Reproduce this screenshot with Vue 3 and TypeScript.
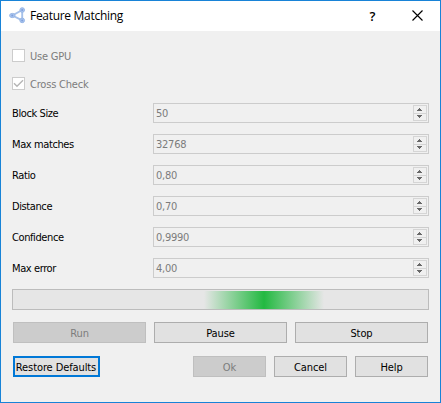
<script setup lang="ts">
interface Field {
  label: string
  value: string
  name: string
}

const fields: Field[] = [
  { label: 'Block Size', value: '50', name: 'block' },
  { label: 'Max matches', value: '32768', name: 'matches' },
  { label: 'Ratio', value: '0,80', name: 'ratio' },
  { label: 'Distance', value: '0,70', name: 'distance' },
  { label: 'Confidence', value: '0,9990', name: 'confidence' },
  { label: 'Max error', value: '4,00', name: 'error' },
]
</script>

<template>
  <div class="dialog">
    <header class="titlebar">
      <svg class="logo" width="17" height="17" viewBox="0 0 17 17">
        <path d="M13.2 3 3.5 8.5 13.2 13.4Z" fill="none" stroke="#a6c1ea" stroke-width="1.9" />
        <g fill="#a9c5f0" stroke="#98b7e6" stroke-width="1">
          <circle cx="13.2" cy="3" r="2.3" />
          <ellipse cx="3.3" cy="8.5" rx="2.7" ry="2.1" />
          <circle cx="13.2" cy="13.4" r="2.3" />
        </g>
        <g fill="#7f9fda">
          <circle cx="13.2" cy="3" r="1" />
          <circle cx="3.3" cy="8.5" r="1" />
          <circle cx="13.2" cy="13.4" r="1" />
        </g>
      </svg>
      <h1 class="title">Feature Matching</h1>
      <span class="question">?</span>
      <svg class="close" width="11" height="11" viewBox="0 0 11 11">
        <path d="M.5.5 10.5 10.5M10.5.5.5 10.5" stroke="#000" stroke-width="1.15" />
      </svg>
    </header>

    <div class="checks">
      <label class="check"><span class="box"></span><span class="caption">Use GPU</span></label>
      <label class="check">
        <span class="box">
          <svg width="11" height="11" viewBox="0 0 11 11">
            <path d="M1 5.3 4 8.3 10 2.3" fill="none" stroke="#b5b5b5" stroke-width="1.4" />
          </svg>
        </span>
        <span class="caption">Cross Check</span>
      </label>
    </div>

    <div class="fields">
      <div v-for="f in fields" :key="f.name" class="row">
        <span class="label">{{ f.label }}</span>
        <div class="spin">
          <span class="value">{{ f.value }}</span>
          <svg class="stepper" width="14" height="16" viewBox="0 0 14 16" shape-rendering="crispEdges">
            <path d="M.5.5H13.5V15.5H.5ZM.5 8.5H13.5" fill="#f0f0f0" stroke="#d5d5d5" />
            <path d="M6 3h1v1h1v1h1v1H4V5h1V4h1ZM4 10h5v1H8v1H7v1H6v-1H5v-1H4Z" fill="#686868" />
          </svg>
        </div>
      </div>
    </div>

    <div class="progress"><div class="chunk"></div></div>

    <div class="actions">
      <button class="btn" disabled>Run</button>
      <button class="btn">Pause</button>
      <button class="btn">Stop</button>
    </div>
    <div class="footer">
      <button class="btn restore">Restore Defaults</button>
      <button class="btn" disabled>Ok</button>
      <button class="btn">Cancel</button>
      <button class="btn">Help</button>
    </div>
  </div>
</template>

<style>
body {
  margin: 0;
}
</style>

<style scoped>
.dialog {
  box-sizing: border-box;
  width: 441px;
  height: 403px;
  border: 1px solid #1883d7;
  background: #f0f0f0;
  font: 11px/16px "DejaVu Sans Condensed", "DejaVu Sans", sans-serif;
  font-stretch: condensed;
  letter-spacing: -0.4px;
  color: #000;
  white-space: nowrap;
}
.titlebar {
  display: flex;
  align-items: center;
  height: 30px;
  padding-left: 8px;
  background: #fff;
  font-family: "Open Sans", "Noto Sans", sans-serif;
  font-stretch: normal;
}
.logo {
  margin-top: -2px;
}
.title {
  flex: 1;
  margin: 0 0 0 4px;
  font-size: 12px;
  font-weight: 400;
  letter-spacing: -0.3px;
}
.question {
  font-size: 13px;
  font-weight: 600;
  line-height: 14px;
  padding-bottom: 1px;
}
.close {
  margin: -2px 17px 0 37px;
}
.checks {
  display: flex;
  flex-direction: column;
  gap: 12px;
  padding: 17px 0 0 11px;
}
.check {
  display: flex;
  align-items: center;
  height: 16px;
  gap: 5px;
  color: #7c7c7c;
}
.caption {
  padding-top: 1px;
  line-height: 17px;
  letter-spacing: -0.2px;
}
.box {
  box-sizing: border-box;
  width: 13px;
  height: 13px;
  margin-top: -1px;
  border: 1px solid #ccc;
  background: #fff;
}
.box svg {
  display: block;
}
.fields {
  display: flex;
  flex-direction: column;
  gap: 11px;
  padding: 11px 11px 0;
}
.row {
  display: flex;
  align-items: center;
  height: 20px;
}
.label {
  width: 141px;
  padding-top: 2px;
}
.spin {
  display: flex;
  align-items: center;
  justify-content: space-between;
  box-sizing: border-box;
  width: 276px;
  height: 20px;
  padding: 0 1px 0 2px;
  border: 1px solid #ccc;
  color: #7c7c7c;
}
.value {
  padding-top: 2px;
  letter-spacing: -0.25px;
}
.progress {
  display: flex;
  justify-content: center;
  box-sizing: border-box;
  width: 417px;
  height: 21px;
  margin: 11px 0 0 11px;
  padding-top: 1px;
  border: 1px solid #bcbcbc;
  background: #e6e6e6;
}
.chunk {
  width: 120px;
  margin-left: 87px;
  background: linear-gradient(90deg, #e6e6e6, #23b941 50%, #e6e6e6);
}
.actions,
.footer {
  display: flex;
  gap: 8px;
  padding: 12px 12px 0;
}
.footer {
  padding-top: 13px;
}
.btn {
  box-sizing: border-box;
  width: 133px;
  height: 21px;
  padding: 2px 0 0;
  border: 1px solid #adadad;
  background: #e1e1e1;
  font: inherit;
  letter-spacing: -0.1px;
  line-height: 17px;
  color: #000;
}
.btn:disabled {
  border-color: #bfbfbf;
  background: #ccc;
  color: #7c7c7c;
}
.footer .btn {
  width: 73px;
}
.footer .restore {
  width: 87px;
  margin-right: auto;
  padding: 1px 1px 0 0;
  border: 2px solid #0078d7;
}
</style>
